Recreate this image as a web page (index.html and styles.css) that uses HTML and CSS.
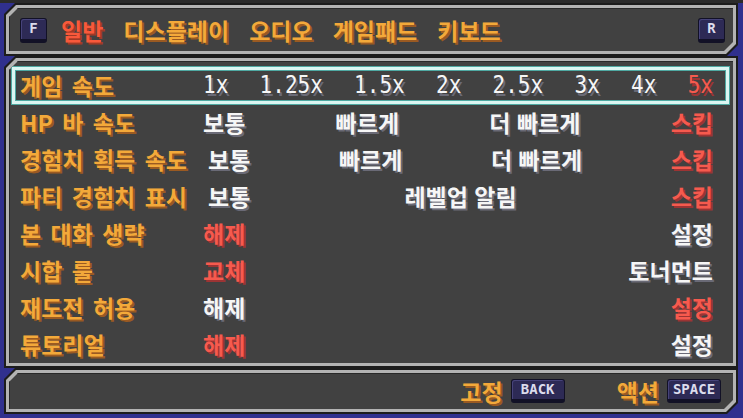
FILE: index.html
```html
<!DOCTYPE html>
<html lang="ko">
<head>
  <meta charset="UTF-8" />
  <meta name="viewport" content="width=device-width, initial-scale=1.0" />
  <title>설정</title>
  <link rel="stylesheet" href="styles.css">
</head>
<body>
  <div class="screen">
    <header class="panel panel-top">
      <div class="panel-edge">
        <div class="panel-fill tabs">
          <span class="key key-small">F</span>
          <nav class="tab-list">
            <span class="tab active">일반</span>
            <span class="tab">디스플레이</span>
            <span class="tab">오디오</span>
            <span class="tab">게임패드</span>
            <span class="tab">키보드</span>
          </nav>
          <span class="key key-small">R</span>
        </div>
      </div>
    </header>

    <main class="panel panel-main">
      <div class="panel-edge">
        <div class="panel-fill settings">
          <div class="row selected">
            <span class="label">게임 속도</span>
            <div class="options speed">
              <span>1x</span>
              <span>1.25x</span>
              <span>1.5x</span>
              <span>2x</span>
              <span>2.5x</span>
              <span>3x</span>
              <span>4x</span>
              <span class="on">5x</span>
            </div>
          </div>

          <div class="row">
            <span class="label">HP 바 속도</span>
            <div class="options">
              <span>보통</span>
              <span>빠르게</span>
              <span>더 빠르게</span>
              <span class="on">스킵</span>
            </div>
          </div>

          <div class="row">
            <span class="label">경험치 획득 속도</span>
            <div class="options">
              <span>보통</span>
              <span>빠르게</span>
              <span>더 빠르게</span>
              <span class="on">스킵</span>
            </div>
          </div>

          <div class="row">
            <span class="label">파티 경험치 표시</span>
            <div class="options">
              <span>보통</span>
              <span>레벨업 알림</span>
              <span class="on">스킵</span>
            </div>
          </div>

          <div class="row">
            <span class="label">본 대화 생략</span>
            <div class="options">
              <span class="on">해제</span>
              <span>설정</span>
            </div>
          </div>

          <div class="row">
            <span class="label">시합 룰</span>
            <div class="options">
              <span class="on">교체</span>
              <span>토너먼트</span>
            </div>
          </div>

          <div class="row">
            <span class="label">재도전 허용</span>
            <div class="options">
              <span>해제</span>
              <span class="on">설정</span>
            </div>
          </div>

          <div class="row">
            <span class="label">튜토리얼</span>
            <div class="options">
              <span class="on">해제</span>
              <span>설정</span>
            </div>
          </div>
        </div>
      </div>
    </main>

    <footer class="panel panel-bottom">
      <div class="panel-edge">
        <div class="panel-fill hints">
          <span class="hint">고정</span>
          <span class="key key-wide">BACK</span>
          <span class="hint hint-next">액션</span>
          <span class="key key-wide">SPACE</span>
        </div>
      </div>
    </footer>
  </div>
</body>
</html>
```

FILE: styles.css
```css
* {
  box-sizing: border-box;
  margin: 0;
  padding: 0;
}

body {
  width: 743px;
  height: 418px;
  overflow: hidden;
  background: linear-gradient(#2b2b2b, #2b2b2b) top / 100% 3px no-repeat, #30308e;
  font-family: "Noto Sans CJK KR", "Noto Sans", sans-serif;
  font-weight: 700;
  font-size: 23px;
}

.screen {
  height: 100%;
  display: flex;
  flex-direction: column;
  padding: 3px 5px 4px 4px;
}

/* chamfered panels: dark outline > grey edge > fill */
.panel,
.panel-edge,
.panel-fill {
  clip-path: polygon(var(--tl) 0, 100% 0, 100% calc(100% - var(--br)), calc(100% - var(--br)) 100%, 0 100%, 0 var(--tl));
}

.panel {
  --tl: 11px;
  --br: 11px;
  background: #1c1c1c;
  padding: 2px;
}

.panel-edge {
  --tl: 10px;
  --br: 10px;
  height: 100%;
  background: #b3b3b3;
  padding: 3px;
}

.panel-fill {
  --tl: 9px;
  --br: 9px;
  height: 100%;
  background: #414141;
  border-top: 1px solid #292929;
  border-left: 1px solid #292929;
}

.panel-main,
.panel-main .panel-edge,
.panel-main .panel-fill {
  --br: 0px;
}

.panel-top {
  height: 54px;
}

.panel-main {
  flex: 1;
}

.panel-bottom {
  height: 47px;
}

/* header tabs */
.tabs {
  display: flex;
  align-items: center;
  padding: 1px 8px 0 10px;
}

.tab-list {
  flex: 1;
  display: flex;
  gap: 20px;
  margin-left: 14px;
}

.tab {
  color: #f3a93a;
  text-shadow: 2px 2px 0 #9a5a22;
  line-height: 1;
}

.tab.active {
  color: #f8593b;
  text-shadow: 2px 2px 0 #a03a26;
}

/* key caps */
.key {
  display: inline-flex;
  align-items: center;
  justify-content: center;
  padding-bottom: 1px;
  color: #dcdcec;
  background: #2d2a55;
  border: 1px solid #121126;
  border-bottom-width: 4px;
  border-radius: 3px;
  box-shadow: inset 1px 1px 0 #46437a;
  font-family: "DejaVu Sans Mono", monospace;
  font-weight: 700;
}

.key-small {
  width: 27px;
  height: 25px;
  font-size: 14px;
}

.key-wide {
  width: 54px;
  height: 24px;
  font-size: 14px;
  letter-spacing: 0;
}

/* settings list */
.settings {
  padding: 5px 4px 0 2px;
}

.row {
  display: flex;
  align-items: center;
  height: 37px;
  padding: 0 13px 0 5px;
  border: 3px solid transparent;
  line-height: 1;
}

.row.selected {
  border-color: #dcf6f2;
  box-shadow: 0 0 0 1px #4fa9a2, inset 0 0 0 1px #4fa9a2;
}

.label {
  min-width: 162px;
  margin-right: 21px;
  color: #f3a93a;
  text-shadow: 2px 2px 0 #9a5a22;
  word-spacing: 3px;
  white-space: nowrap;
}

.options {
  flex: 1;
  display: flex;
  justify-content: space-between;
  color: #f6f6f6;
  text-shadow: 2px 2px 0 #6a6a76;
  white-space: nowrap;
}

.options .on {
  color: #f65a4e;
  text-shadow: 2px 2px 0 #9c3434;
}

.speed span {
  display: inline-block;
  font-family: "DejaVu Sans Mono", monospace;
  font-weight: 400;
  font-size: 21px;
  transform: scaleY(1.22);
}

/* footer hints */
.hints {
  display: flex;
  align-items: center;
  justify-content: flex-end;
  gap: 8px;
  padding: 0 12px 0 0;
}

.hint {
  color: #f3a93a;
  text-shadow: 2px 2px 0 #9a5a22;
  line-height: 1;
}

.hint-next {
  margin-left: 44px;
}
```
